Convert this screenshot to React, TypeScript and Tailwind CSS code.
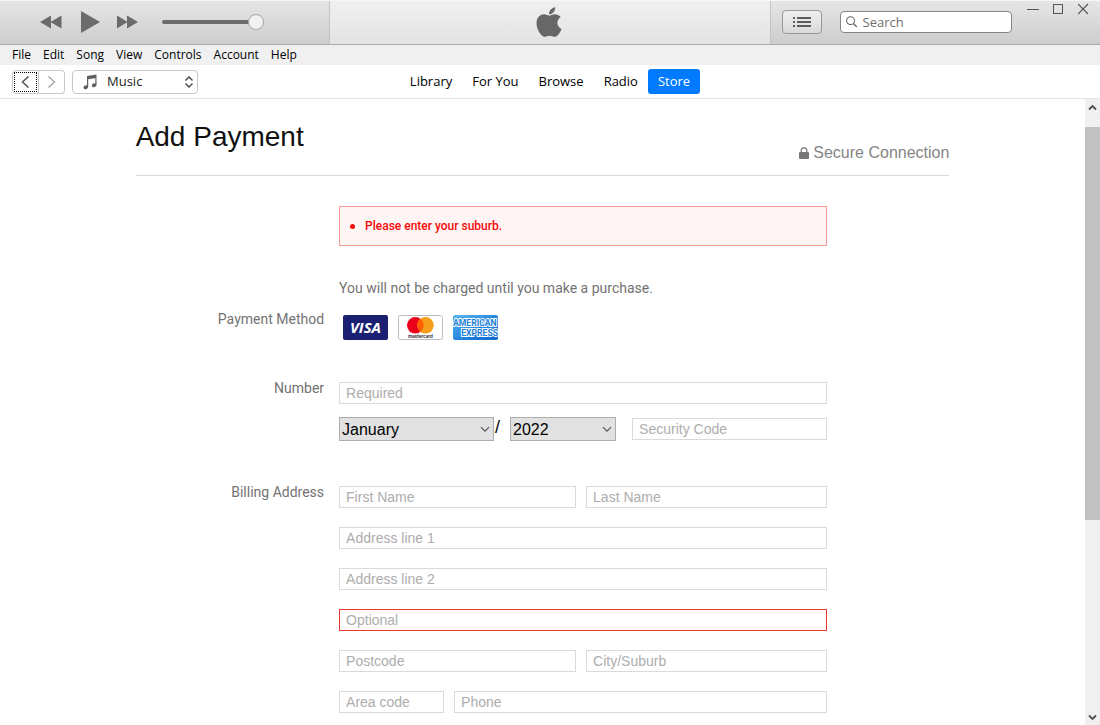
import { useState, type InputHTMLAttributes, type ReactNode } from "react";
import { FaApple } from "react-icons/fa";

const MENUS = ["File", "Edit", "Song", "View", "Controls", "Account", "Help"];
const TABS = ["Library", "For You", "Browse", "Radio", "Store"];
const MONTHS = [
  "January",
  "February",
  "March",
  "April",
  "May",
  "June",
  "July",
  "August",
  "September",
  "October",
  "November",
  "December",
];
const YEARS = ["2022", "2023", "2024", "2025", "2026", "2027"];

function Playback() {
  return (
    <div className="flex basis-[30%] items-center border-r border-[#c4c4c4] bg-linear-to-b from-[#e6e6e6] to-[#cdcdcd] pb-0.5 pl-10">
      <button aria-label="Previous">
        <svg width="22" height="14" viewBox="0 0 22 14" fill="#6b6b6b" aria-hidden>
          <path d="M11 0.5V13.5L0 7Z M21.5 0.5V13.5L10.5 7Z" />
        </svg>
      </button>
      <button aria-label="Play" className="ml-[18px]">
        <svg width="20" height="22" viewBox="0 0 20 22" fill="#6b6b6b" aria-hidden>
          <path d="M1 0L20 11L1 22Z" />
        </svg>
      </button>
      <button aria-label="Next" className="ml-4">
        <svg width="22" height="14" viewBox="0 0 22 14" fill="#6b6b6b" aria-hidden>
          <path d="M1 0.5V13.5L11.5 7Z M11 0.5V13.5L22 7Z" />
        </svg>
      </button>
      <input
        type="range"
        aria-label="Volume"
        defaultValue={100}
        className="ml-6 h-4 w-[102px] appearance-none bg-transparent
                   [&::-webkit-slider-runnable-track]:h-1 [&::-webkit-slider-runnable-track]:rounded-full [&::-webkit-slider-runnable-track]:bg-[#6b6b6b]
                   [&::-webkit-slider-thumb]:-mt-1.5 [&::-webkit-slider-thumb]:size-4 [&::-webkit-slider-thumb]:appearance-none [&::-webkit-slider-thumb]:rounded-full
                   [&::-webkit-slider-thumb]:border [&::-webkit-slider-thumb]:border-[#a8a8a8] [&::-webkit-slider-thumb]:bg-[#f2f2f2]"
      />
    </div>
  );
}

function WindowControls() {
  return (
    <div className="ml-[14px] flex gap-3 self-start pt-px">
      <button aria-label="Minimize">
        <svg width="14" height="14" viewBox="0 0 14 14" stroke="#555" fill="none" aria-hidden>
          <path d="M1 7.5H13" />
        </svg>
      </button>
      <button aria-label="Maximize">
        <svg width="14" height="14" viewBox="0 0 14 14" stroke="#555" fill="none" aria-hidden>
          <rect x="1.5" y="2.5" width="9" height="9" />
        </svg>
      </button>
      <button aria-label="Close">
        <svg width="14" height="14" viewBox="0 0 14 14" stroke="#555" fill="none" aria-hidden>
          <path d="M0 2L10 12M10 2L0 12" strokeWidth="1.2" />
        </svg>
      </button>
    </div>
  );
}

function TitleBar() {
  return (
    <header className="flex h-[45px] shrink-0 border-t border-b border-t-[#f6f6f6] border-b-[#ababab]">
      <Playback />
      <div className="flex flex-1 items-center justify-center bg-linear-to-b from-[#f0f0f0] to-[#e3e3e3] pr-0.5 pb-px">
        <FaApple size={34} color="#676767" aria-hidden />
      </div>
      <div className="flex basis-[30%] items-center border-l border-[#c4c4c4] bg-linear-to-b from-[#e6e6e6] to-[#cdcdcd] pb-0.5 pl-[11px]">
        <button
          aria-label="Up next"
          className="flex h-6 w-10 shrink-0 items-center justify-center rounded border border-[#999] bg-linear-to-b from-[#f0f0f0] to-[#d9d9d9]"
        >
          <svg width="18" height="12" viewBox="0 0 18 12" fill="#5c5c5c" aria-hidden>
            <path d="M0 1h2v2H0z M4 1h14v2H4z M0 5h2v2H0z M4 5h14v2H4z M0 9h2v2H0z M4 9h14v2H4z" />
          </svg>
        </button>
        <label className="ml-[18px] flex h-[22px] w-[172px] items-center rounded border border-[#868686] bg-white pl-[5px]">
          <svg width="14" height="14" viewBox="0 0 14 14" stroke="#6b6b6b" fill="none" aria-hidden>
            <circle cx="5" cy="5.5" r="4.4" strokeWidth="1.2" />
            <path d="M8 8.5L12 12.5" strokeWidth="1.6" />
          </svg>
          <input
            type="search"
            aria-label="Search"
            placeholder="Search"
            className="ml-1 w-full min-w-0 text-[13px] leading-5 outline-none placeholder:text-[#6f6f6f]"
          />
        </label>
        <WindowControls />
      </div>
    </header>
  );
}

function Toolbar() {
  const [tab, setTab] = useState("Store");
  return (
    <div className="grid h-[34px] shrink-0 grid-cols-[1fr_auto_1fr] items-center border-b border-[#e3e3e3] px-3">
      <div className="flex">
        <button
          aria-label="Back"
          className="flex h-6 w-[27px] items-center justify-center rounded-l border border-[#c8c8c8] p-px"
        >
          <span className="flex size-full items-center justify-center border border-dotted border-black">
            <svg width="9" height="12" viewBox="0 0 9 12" fill="none" stroke="#555" strokeWidth="1.5" aria-hidden>
              <path d="M7.5 0.5L1.5 6L7.5 11.5" />
            </svg>
          </span>
        </button>
        <button
          aria-label="Forward"
          className="flex h-6 w-[26px] items-center justify-center rounded-r border border-l-0 border-[#c8c8c8]"
        >
          <svg width="9" height="12" viewBox="0 0 9 12" fill="none" stroke="#a3a3a3" strokeWidth="1.3" aria-hidden>
            <path d="M1.5 0.5L7.5 6L1.5 11.5" />
          </svg>
        </button>
        <div className="relative ml-[7px]">
          <select
            aria-label="Media type"
            className="block h-6 w-[126px] appearance-none rounded border border-[#c8c8c8] bg-white pl-[34px] text-[13px] text-[#222]"
          >
            <option>Music</option>
            <option>Movies</option>
            <option>Podcasts</option>
          </select>
          <svg
            className="pointer-events-none absolute top-1 left-2.5"
            width="16"
            height="16"
            viewBox="0 0 16 16"
            fill="#5f5f5f"
            aria-hidden
          >
            <path d="M5 2L14.5 0.5V4L5 5.5Z M5 2H6.2V13H5Z M13.3 1H14.5V11H13.3Z" />
            <ellipse cx="3.8" cy="13.2" rx="2.4" ry="1.9" transform="rotate(-20 3.8 13.2)" />
            <ellipse cx="12.1" cy="11.2" rx="2.4" ry="1.9" transform="rotate(-20 12.1 11.2)" />
          </svg>
          <svg
            className="pointer-events-none absolute top-1.5 right-1"
            width="10"
            height="12"
            viewBox="0 0 10 12"
            fill="none"
            stroke="#444"
            strokeWidth="1.4"
            aria-hidden
          >
            <path d="M1.5 4.5L5 1L8.5 4.5M1.5 7.5L5 11L8.5 7.5" />
          </svg>
        </div>
      </div>
      <nav className="flex text-[13px] text-black">
        {TABS.map((t) => (
          <button
            key={t}
            onClick={() => setTab(t)}
            className={`h-[25px] px-2.5 ${t === tab ? "rounded-[3px] bg-[#007aff] text-white" : ""}`}
          >
            {t}
          </button>
        ))}
      </nav>
    </div>
  );
}

function Cards() {
  return (
    <div className="flex gap-2.5 pt-1 pl-1">
      <svg width="45" height="25" viewBox="0 0 45 25" role="img" aria-label="Visa">
        <rect width="45" height="25" rx="2" fill="#1a1f71" />
        <text
          x="22.5"
          y="18"
          textAnchor="middle"
          fill="#fff"
          fontFamily="Open Sans, sans-serif"
          fontSize="15"
          fontWeight="700"
          fontStyle="italic"
        >
          VISA
        </text>
      </svg>
      <svg width="45" height="25" viewBox="0 0 45 25" role="img" aria-label="Mastercard">
        <rect x="0.5" y="0.5" width="44" height="24" rx="2" fill="#fff" stroke="#bdbdbd" />
        <circle cx="17.3" cy="10.3" r="8.3" fill="#eb001b" />
        <circle cx="27.5" cy="10.3" r="8.3" fill="#f79e1b" />
        <path d="M22.4 3.7a8.3 8.3 0 0 1 0 13.2a8.3 8.3 0 0 1 0-13.2Z" fill="#ff5f00" />
        <text
          x="22.5"
          y="22.8"
          textAnchor="middle"
          fill="#222"
          fontFamily="Lato, sans-serif"
          fontSize="5"
          fontWeight="700"
        >
          mastercard
        </text>
      </svg>
      <svg width="45" height="25" viewBox="0 0 45 25" role="img" aria-label="American Express">
        <defs>
          <linearGradient id="amex" x1="0" y1="0" x2="1" y2="1">
            <stop offset="0" stopColor="#5cb8ee" />
            <stop offset="0.6" stopColor="#1f80dc" />
            <stop offset="1" stopColor="#0f69cc" />
          </linearGradient>
          <clipPath id="amex-card">
            <rect width="45" height="25" rx="2" />
          </clipPath>
        </defs>
        <rect width="45" height="25" rx="2" fill="url(#amex)" />
        <g
          clipPath="url(#amex-card)"
          fill="#2380d6"
          stroke="#fff"
          strokeWidth="1.8"
          paintOrder="stroke"
          fontFamily="Roboto, sans-serif"
          fontSize="8.6"
          fontWeight="700"
        >
          <text x="0" y="11.2">
            AMERICAN
          </text>
          <text x="45" y="21" textAnchor="end">
            EXPRESS
          </text>
        </g>
      </svg>
    </div>
  );
}

function Row({ label, className, children }: { label?: string; className: string; children: ReactNode }) {
  return (
    <div className={`grid grid-cols-[25%_60%] ${className}`}>
      <div className="pr-[15px] text-right font-['Roboto',sans-serif] text-sm leading-4 text-[#737373]">
        {label}
      </div>
      <div>{children}</div>
    </div>
  );
}

type FieldProps = InputHTMLAttributes<HTMLInputElement> & { label: string; invalid?: boolean };

function Field({ label, invalid, className = "w-full", ...rest }: FieldProps) {
  return (
    <input
      type="text"
      aria-label={label}
      aria-invalid={invalid}
      placeholder={label}
      className={`block h-[22px] min-w-0 border bg-white px-1.5 text-sm outline-none placeholder:text-[#adadad] ${
        invalid ? "border-[#f0372b]" : "border-[#dadada]"
      } ${className}`}
      {...rest}
    />
  );
}

function Picker({ label, options, className }: { label: string; options: string[]; className: string }) {
  return (
    <div className={`relative ${className}`}>
      <select
        aria-label={label}
        className="block h-6 w-full appearance-none border border-[#adadad] bg-[#e1e1e1] pt-0.5 pl-0.5 text-base leading-5 text-black"
      >
        {options.map((o) => (
          <option key={o}>{o}</option>
        ))}
      </select>
      <svg
        className="pointer-events-none absolute top-[9px] right-1"
        width="10"
        height="7"
        viewBox="0 0 10 7"
        fill="none"
        stroke="#555"
        strokeWidth="1.2"
        aria-hidden
      >
        <path d="M1 1.2L5 5.2L9 1.2" />
      </svg>
    </div>
  );
}

function PaymentForm() {
  return (
    <form className="mx-auto w-3/4 font-['Liberation_Sans',Arial,sans-serif]">
      <div className="flex items-end justify-between border-b border-[#dadada] pt-[18px]">
        <h1 className="mb-[18px] text-[28px] leading-10 text-[#111]">Add Payment</h1>
        <p className="mb-2.5 flex items-center gap-1 text-base leading-6 text-[#858585]">
          <svg width="10" height="12" viewBox="0 0 10 12" aria-hidden>
            <path d="M2.2 5.5V3.6a2.8 2.8 0 0 1 5.6 0V5.5" fill="none" stroke="#8a8a8a" strokeWidth="1.4" />
            <rect y="5" width="10" height="7" rx="1" fill="#777" />
          </svg>
          Secure Connection
        </p>
      </div>

      <Row className="mt-[30px]">
        <ul
          role="alert"
          className="flex h-10 items-center border border-[#f59a95] bg-[#fff5f4] font-['Roboto',sans-serif] text-xs font-medium text-[#f50a0a]"
        >
          <li className="flex items-center gap-2.5 pl-2.5 before:size-[5px] before:rounded-full before:bg-[#f50a0a]">
            Please enter your suburb.
          </li>
        </ul>
        <p className="mt-[34px] font-['Roboto',sans-serif] text-sm leading-4 text-[#737373]">
          You will not be charged until you make a purchase.
        </p>
      </Row>

      <Row label="Payment Method" className="mt-[15px]">
        <Cards />
      </Row>

      <Row label="Number" className="mt-10">
        <div className="pt-0.5">
          <Field label="Card number" placeholder="Required" />
          <div className="mt-[13px] flex items-center">
            <Picker label="Expiry month" options={MONTHS} className="w-[155px]" />
            <span className="w-4 pb-1 pl-px text-lg leading-5">/</span>
            <Picker label="Expiry year" options={YEARS} className="w-[106px]" />
            <Field label="Security Code" className="ml-4 flex-1" />
          </div>
        </div>
      </Row>

      <Row label="Billing Address" className="mt-[43px]">
        <div className="flex flex-col gap-[19px] pt-0.5">
          <div className="flex gap-2.5">
            <Field label="First Name" className="w-[237px]" />
            <Field label="Last Name" className="flex-1" />
          </div>
          <Field label="Address line 1" />
          <Field label="Address line 2" />
          <Field label="Suburb" placeholder="Optional" invalid />
          <div className="flex gap-2.5">
            <Field label="Postcode" className="w-[237px]" />
            <Field label="City/Suburb" className="flex-1" />
          </div>
          <div className="flex gap-2.5">
            <Field label="Area code" className="w-[105px]" />
            <Field label="Phone" className="flex-1" />
          </div>
        </div>
      </Row>
    </form>
  );
}

function ScrollBar() {
  return (
    <div className="flex w-[15px] shrink-0 flex-col bg-[#f0f0f0]" aria-hidden>
      <div className="flex h-7 justify-center pt-[5px]">
        <svg width="9" height="7" viewBox="0 0 9 7" fill="none" stroke="#505050" strokeWidth="1.8">
          <path d="M1 5.5L4.5 2L8 5.5" />
        </svg>
      </div>
      <div className="flex-1">
        <div className="h-[67.5%] bg-[#c1c1c1]" />
      </div>
      <div className="flex h-4 justify-center pt-[5px]">
        <svg width="9" height="7" viewBox="0 0 9 7" fill="none" stroke="#505050" strokeWidth="1.8">
          <path d="M1 1.5L4.5 5L8 1.5" />
        </svg>
      </div>
    </div>
  );
}

export default function App() {
  return (
    <div className="flex h-screen flex-col overflow-hidden bg-white font-['Open_Sans','Noto_Sans',sans-serif]">
      <TitleBar />
      <div className="flex h-5 shrink-0 items-center gap-3 bg-[#f0f0f0] pl-3 text-xs text-black">
        {MENUS.map((m) => (
          <button key={m}>{m}</button>
        ))}
      </div>
      <Toolbar />
      <div className="flex min-h-0 flex-1">
        <main className="min-w-0 flex-1 overflow-hidden">
          <PaymentForm />
        </main>
        <ScrollBar />
      </div>
    </div>
  );
}
